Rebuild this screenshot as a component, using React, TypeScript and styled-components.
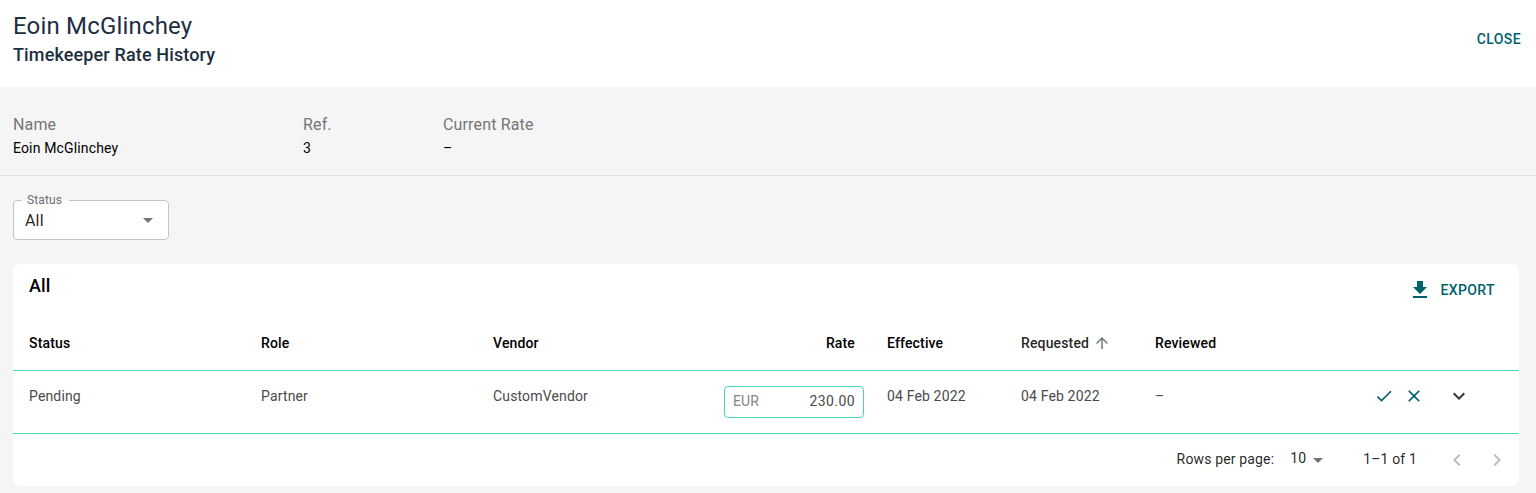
import React from "react";
import styled, { createGlobalStyle } from "styled-components";

const teal = "#00626b";
const mint = "#45d5b8";
const grey = "#f5f5f5";

const GlobalStyle = createGlobalStyle`
  * { box-sizing: border-box; }
  body {
    margin: 0;
    min-height: 100vh;
    background: ${grey};
    color: rgba(0, 0, 0, 0.87);
    font-family: Roboto, "Liberation Sans", sans-serif;
    font-size: 14px;
    line-height: 20px;
    letter-spacing: 0.01071em;
  }
  button, input, select { font: inherit; letter-spacing: inherit; color: inherit; }
`;

const Header = styled.header`
  display: flex;
  align-items: center;
  justify-content: space-between;
  padding: 10px 15px 19px 13px;
  background: #fff;
`;

const PersonName = styled.h1`
  margin: 0;
  font-size: 24px;
  font-weight: 400;
  line-height: 32px;
  letter-spacing: 0.0075em;
  color: #1d2f3f;
`;

const PageTitle = styled.h2`
  margin: 0;
  font-size: 18px;
  font-weight: 500;
  line-height: 26px;
  letter-spacing: 0.0075em;
  color: #1d2f3f;
`;

const TextButton = styled.button`
  display: inline-flex;
  align-items: center;
  gap: 8px;
  padding: 0;
  border: 0;
  background: none;
  color: ${teal};
  font-weight: 500;
  line-height: 24px;
  letter-spacing: 0.02857em;
  text-transform: uppercase;
  cursor: pointer;
`;

const Summary = styled.dl`
  display: grid;
  grid-template-columns: 290px 140px 1fr;
  margin: 0;
  padding: 26px 13px 16px;
  border-bottom: 1px solid #e0e0e0;
`;

const SummaryLabel = styled.dt`
  font-size: 16px;
  line-height: 24px;
  letter-spacing: 0.00938em;
  color: #757575;
`;

const SummaryValue = styled.dd`
  margin: 0;
  line-height: 22px;
  color: #000;
`;

const Content = styled.main`
  display: flex;
  flex-direction: column;
  align-items: flex-start;
  gap: 24px;
  padding: 24px 17px 7px 13px;
`;

const SelectField = styled.div`
  position: relative;
  width: 156px;
  border-radius: 4px;
  background: #fff;
`;

const FloatingLabel = styled.label`
  position: absolute;
  top: -10px;
  left: 14px;
  font-size: 12px;
  line-height: 20px;
  letter-spacing: 0.00938em;
  color: #6e6e6e;
`;

const Outline = styled.fieldset`
  position: absolute;
  inset: -5px 0 0;
  margin: 0;
  padding: 0 8px;
  border: 1px solid #c4c4c4;
  border-radius: 4px;
  pointer-events: none;
`;

const Notch = styled.legend`
  width: 47px;
  height: 10px;
  padding: 0;
`;

const StatusSelect = styled.select`
  display: block;
  width: 100%;
  height: 40px;
  padding: 2px 32px 0 12px;
  border: 0;
  border-radius: 4px;
  background: none;
  font-size: 16px;
  appearance: none;
`;

const SelectArrow = styled.span<{ $right: number }>`
  position: absolute;
  top: 0;
  bottom: 0;
  right: ${(p) => p.$right}px;
  display: flex;
  align-items: center;
  color: #757575;
  pointer-events: none;
`;

const Card = styled.section`
  width: 100%;
  border-radius: 8px;
  background: #fff;
`;

const CardHeader = styled.div`
  display: flex;
  align-items: flex-start;
  justify-content: space-between;
  height: 52px;
  padding: 9px 24px 0 16px;
`;

const CardTitle = styled.h3`
  margin: 0;
  font-size: 18px;
  font-weight: 500;
  line-height: 26px;
  letter-spacing: 0.0075em;
  color: #000;
`;

const ExportButton = styled(TextButton)`
  margin-top: 5px;
`;

const Table = styled.table`
  width: 100%;
  table-layout: fixed;
  border-collapse: separate;
  border-spacing: 0;
`;

const Col = styled.col<{ $width?: number }>`
  width: ${(p) => (p.$width ? `${p.$width}px` : "auto")};
`;

const HeadCell = styled.th<{ $align?: string }>`
  padding: 17px 16px;
  border-bottom: 1px solid ${mint};
  font-weight: 500;
  text-align: ${(p) => p.$align ?? "left"};
  color: #000;
`;

const SortButton = styled.button`
  display: flex;
  align-items: center;
  gap: 4px;
  padding: 0;
  border: 0;
  background: none;
  font-weight: 500;
  color: rgba(0, 0, 0, 0.87);

  svg { color: #757575; }
`;

const Cell = styled.td`
  padding: 15px 16px;
  vertical-align: top;
  color: #4a4a4a;
`;

const RateCell = styled(Cell)`
  padding-right: 7px;
  padding-left: 15px;
`;

const RateField = styled.label`
  display: flex;
  align-items: center;
  height: 32px;
  padding: 0 8px 2px;
  border: 1px solid ${mint};
  border-radius: 4px;
  color: #858585;
`;

const RateInput = styled.input`
  flex: 1;
  min-width: 0;
  padding: 0;
  border: 0;
  background: none;
  color: #4a4a4a;
  text-align: right;
  letter-spacing: 0.03em;
  outline: none;
`;

const Actions = styled.div`
  display: flex;
  align-items: center;
  justify-content: flex-end;
  height: 20px;
  padding-right: 32px;
`;

const IconButton = styled.button<{ $size: number; $color: string }>`
  display: flex;
  align-items: center;
  justify-content: center;
  width: ${(p) => p.$size}px;
  height: ${(p) => p.$size}px;
  padding: 0;
  border: 0;
  background: none;
  color: ${(p) => p.$color};
`;

const ExpandButton = styled(IconButton)`
  margin-left: 18px;
`;

const Pagination = styled.footer`
  display: flex;
  align-items: center;
  justify-content: flex-end;
  height: 53px;
  padding-right: 2px;
  border-top: 1px solid ${mint};
`;

const RowsLabel = styled.label`
  padding-bottom: 2px;
`;

const RowsRange = styled.span`
  padding-bottom: 2px;
`;

const RowsSelectWrap = styled.div`
  position: relative;
  margin: 0 32px 0 8px;
`;

const RowsSelect = styled.select`
  display: block;
  width: 49px;
  height: 24px;
  padding: 0 24px 4px 8px;
  border: 0;
  background: none;
  appearance: none;
`;

const PageButtons = styled.div`
  display: flex;
  margin-left: 20px;
`;

const paths = {
  download: "M19 9h-4V3H9v6H5l7 7 7-7zM5 18v2h14v-2H5z",
  dropdown: "M7 10l5 5 5-5z",
  up: "M4 12l1.41 1.41L11 7.83V20h2V7.83l5.58 5.59L20 12l-8-8-8 8z",
  check: "M9 16.17L4.83 12l-1.42 1.41L9 19 21 7l-1.41-1.41z",
  close:
    "M19 6.41L17.59 5 12 10.59 6.41 5 5 6.41 10.59 12 5 17.59 6.41 19 12 13.41 17.59 19 19 17.59 13.41 12z",
  down: "M7.41 8.59L12 13.17l4.59-4.58L18 10l-6 6-6-6 1.41-1.41z",
  left: "M15.41 16.59L10.83 12l4.58-4.59L14 6l-6 6 6 6 1.41-1.41z",
  right: "M8.59 16.59L13.17 12 8.59 7.41 10 6l6 6-6 6-1.41-1.41z",
};

function Icon({ name, size = 24 }: { name: keyof typeof paths; size?: number }) {
  return (
    <svg width={size} height={size} viewBox="0 0 24 24" fill="currentColor" aria-hidden="true">
      <path d={paths[name]} />
    </svg>
  );
}

const summary = [
  { label: "Name", value: "Eoin McGlinchey" },
  { label: "Ref.", value: "3" },
  { label: "Current Rate", value: "–" },
];

const rates = [
  {
    status: "Pending",
    role: "Partner",
    vendor: "CustomVendor",
    currency: "EUR",
    rate: "230.00",
    effective: "04 Feb 2022",
    requested: "04 Feb 2022",
    reviewed: "–",
  },
];

export default function App() {
  return (
    <>
      <GlobalStyle />
      <Header>
        <div>
          <PersonName>Eoin McGlinchey</PersonName>
          <PageTitle>Timekeeper Rate History</PageTitle>
        </div>
        <TextButton type="button">Close</TextButton>
      </Header>
      <Summary>
        {summary.map((item) => (
          <div key={item.label}>
            <SummaryLabel>{item.label}</SummaryLabel>
            <SummaryValue>{item.value}</SummaryValue>
          </div>
        ))}
      </Summary>
      <Content>
        <SelectField>
          <StatusSelect id="status">
            <option>All</option>
          </StatusSelect>
          <Outline aria-hidden="true">
            <Notch />
          </Outline>
          <FloatingLabel htmlFor="status">Status</FloatingLabel>
          <SelectArrow $right={9}>
            <Icon name="dropdown" />
          </SelectArrow>
        </SelectField>
        <Card>
          <CardHeader>
            <CardTitle>All</CardTitle>
            <ExportButton type="button">
              <Icon name="download" />
              Export
            </ExportButton>
          </CardHeader>
          <Table>
            <colgroup>
              <Col />
              <Col />
              <Col />
              <Col $width={162} />
              <Col $width={134} />
              <Col $width={134} />
              <Col $width={134} />
              <Col $width={246} />
            </colgroup>
            <thead>
              <tr>
                <HeadCell>Status</HeadCell>
                <HeadCell>Role</HeadCell>
                <HeadCell>Vendor</HeadCell>
                <HeadCell $align="right">Rate</HeadCell>
                <HeadCell>Effective</HeadCell>
                <HeadCell aria-sort="ascending">
                  <SortButton type="button">
                    Requested
                    <Icon name="up" size={18} />
                  </SortButton>
                </HeadCell>
                <HeadCell>Reviewed</HeadCell>
                <HeadCell aria-label="Actions" />
              </tr>
            </thead>
            <tbody>
              {rates.map((row) => (
                <tr key={row.vendor}>
                  <Cell>{row.status}</Cell>
                  <Cell>{row.role}</Cell>
                  <Cell>{row.vendor}</Cell>
                  <RateCell>
                    <RateField>
                      {row.currency}
                      <RateInput defaultValue={row.rate} />
                    </RateField>
                  </RateCell>
                  <Cell>{row.effective}</Cell>
                  <Cell>{row.requested}</Cell>
                  <Cell>{row.reviewed}</Cell>
                  <Cell>
                    <Actions>
                      <IconButton type="button" aria-label="Approve" $size={30} $color={teal}>
                        <Icon name="check" size={20} />
                      </IconButton>
                      <IconButton type="button" aria-label="Reject" $size={30} $color={teal}>
                        <Icon name="close" size={20} />
                      </IconButton>
                      <ExpandButton type="button" aria-label="Expand" $size={24} $color="#333">
                        <Icon name="down" />
                      </ExpandButton>
                    </Actions>
                  </Cell>
                </tr>
              ))}
            </tbody>
          </Table>
          <Pagination>
            <RowsLabel htmlFor="rows">Rows per page:</RowsLabel>
            <RowsSelectWrap>
              <RowsSelect id="rows">
                <option>10</option>
              </RowsSelect>
              <SelectArrow $right={1}>
                <Icon name="dropdown" />
              </SelectArrow>
            </RowsSelectWrap>
            <RowsRange>1–1 of 1</RowsRange>
            <PageButtons>
              <IconButton type="button" aria-label="Previous page" $size={40} $color="#bdbdbd">
                <Icon name="left" />
              </IconButton>
              <IconButton type="button" aria-label="Next page" $size={40} $color="#bdbdbd">
                <Icon name="right" />
              </IconButton>
            </PageButtons>
          </Pagination>
        </Card>
      </Content>
    </>
  );
}
